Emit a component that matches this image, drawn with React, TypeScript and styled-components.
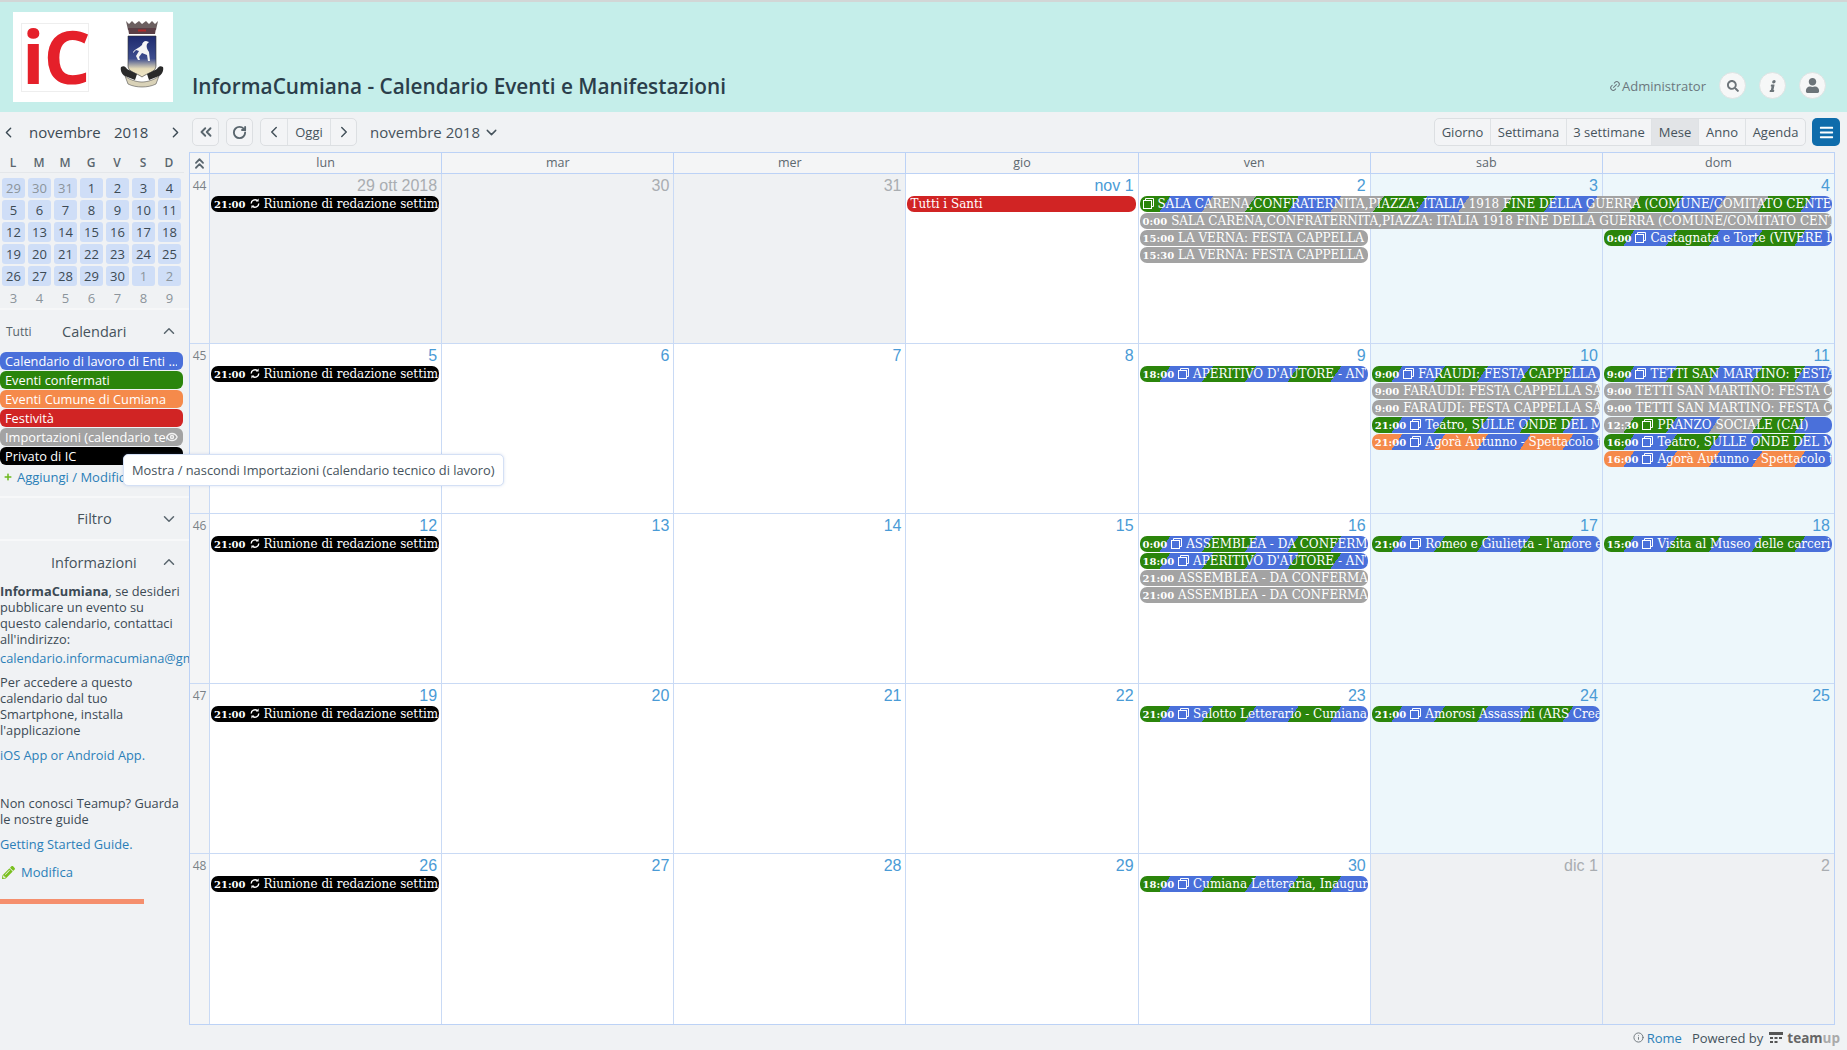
import React from 'react'
import styled, { createGlobalStyle } from 'styled-components'
import { ChevronDown, ChevronLeft, ChevronRight, ChevronUp, ChevronsLeft, ChevronsUp, Eye, Info, Link2, RotateCw } from 'lucide-react'
import { FaBars, FaInfo, FaPencilAlt, FaPlus, FaSearch, FaUser } from 'react-icons/fa'

const GREEN = '#2b850b'
const BLUE = '#4a70da'
const ORANGE = '#f58a4b'
const GRAY = '#a3a3a3'
const RED = '#d12424'
const BLACK = '#000000'

type EventItem = {
  col: number
  span?: number
  row: number
  time?: string
  title: string
  colors: string[]
  icon?: 'copy' | 'repeat'
}

const riunione = (): EventItem => ({
  col: 0,
  row: 0,
  time: '21:00',
  title: 'Riunione di redazione settimanale',
  colors: [BLACK],
  icon: 'repeat'
})

const sala = 'SALA CARENA,CONFRATERNITA,PIAZZA: ITALIA 1918 FINE DELLA GUERRA (COMUNE/COMITATO CENTENARIO)'
const gb = [GREEN, BLUE]

const weeks: { num: number; days: { label: string; muted?: boolean }[]; grayCols: number[]; events: EventItem[] }[] = [
  {
    num: 44,
    days: [
      { label: '29 ott 2018', muted: true },
      { label: '30', muted: true },
      { label: '31', muted: true },
      { label: 'nov 1' },
      { label: '2' },
      { label: '3' },
      { label: '4' }
    ],
    grayCols: [0, 1, 2],
    events: [
      riunione(),
      { col: 3, row: 0, title: 'Tutti i Santi', colors: [RED] },
      { col: 4, span: 3, row: 0, title: sala, colors: [GREEN, BLUE, GRAY], icon: 'copy' },
      { col: 4, span: 3, row: 1, time: '0:00', title: sala, colors: [GRAY] },
      { col: 4, row: 2, time: '15:00', title: 'LA VERNA: FESTA CAPPELLA SAN ROCCO', colors: [GRAY] },
      { col: 6, row: 2, time: '0:00', title: 'Castagnata e Torte (VIVERE LA VITA)', colors: gb, icon: 'copy' },
      { col: 4, row: 3, time: '15:30', title: 'LA VERNA: FESTA CAPPELLA SAN ROCCO', colors: [GRAY] }
    ]
  },
  {
    num: 45,
    days: [{ label: '5' }, { label: '6' }, { label: '7' }, { label: '8' }, { label: '9' }, { label: '10' }, { label: '11' }],
    grayCols: [],
    events: [
      riunione(),
      { col: 4, row: 0, time: '18:00', title: "APERITIVO D'AUTORE - ANTEPRIMA", colors: gb, icon: 'copy' },
      { col: 5, row: 0, time: '9:00', title: 'FARAUDI: FESTA CAPPELLA SAN MARTINO', colors: gb, icon: 'copy' },
      { col: 5, row: 1, time: '9:00', title: 'FARAUDI: FESTA CAPPELLA SAN MARTINO', colors: [GRAY] },
      { col: 5, row: 2, time: '9:00', title: 'FARAUDI: FESTA CAPPELLA SAN MARTINO', colors: [GRAY] },
      { col: 5, row: 3, time: '21:00', title: 'Teatro, SULLE ONDE DEL MARE', colors: gb, icon: 'copy' },
      { col: 5, row: 4, time: '21:00', title: 'Agorà Autunno - Spettacolo teatrale', colors: [ORANGE, BLUE], icon: 'copy' },
      { col: 6, row: 0, time: '9:00', title: 'TETTI SAN MARTINO: FESTA CAPPELLA', colors: gb, icon: 'copy' },
      { col: 6, row: 1, time: '9:00', title: 'TETTI SAN MARTINO: FESTA CAPPELLA', colors: [GRAY] },
      { col: 6, row: 2, time: '9:00', title: 'TETTI SAN MARTINO: FESTA CAPPELLA', colors: [GRAY] },
      { col: 6, row: 3, time: '12:30', title: 'PRANZO SOCIALE (CAI)', colors: [GRAY, GREEN, BLUE], icon: 'copy' },
      { col: 6, row: 4, time: '16:00', title: 'Teatro, SULLE ONDE DEL MARE', colors: gb, icon: 'copy' },
      { col: 6, row: 5, time: '16:00', title: 'Agorà Autunno - Spettacolo teatrale', colors: [ORANGE, BLUE], icon: 'copy' }
    ]
  },
  {
    num: 46,
    days: [{ label: '12' }, { label: '13' }, { label: '14' }, { label: '15' }, { label: '16' }, { label: '17' }, { label: '18' }],
    grayCols: [],
    events: [
      riunione(),
      { col: 4, row: 0, time: '0:00', title: 'ASSEMBLEA - DA CONFERMARE', colors: gb, icon: 'copy' },
      { col: 4, row: 1, time: '18:00', title: "APERITIVO D'AUTORE - ANTEPRIMA", colors: gb, icon: 'copy' },
      { col: 4, row: 2, time: '21:00', title: 'ASSEMBLEA - DA CONFERMARE', colors: [GRAY] },
      { col: 4, row: 3, time: '21:00', title: 'ASSEMBLEA - DA CONFERMARE', colors: [GRAY] },
      { col: 5, row: 0, time: '21:00', title: "Romeo e Giulietta - l'amore è cieco", colors: gb, icon: 'copy' },
      { col: 6, row: 0, time: '15:00', title: 'Visita al Museo delle carceri nuove', colors: gb, icon: 'copy' }
    ]
  },
  {
    num: 47,
    days: [{ label: '19' }, { label: '20' }, { label: '21' }, { label: '22' }, { label: '23' }, { label: '24' }, { label: '25' }],
    grayCols: [],
    events: [
      riunione(),
      { col: 4, row: 0, time: '21:00', title: 'Salotto Letterario - Cumiana legge', colors: gb, icon: 'copy' },
      { col: 5, row: 0, time: '21:00', title: 'Amorosi Assassini (ARS Creativa)', colors: gb, icon: 'copy' }
    ]
  },
  {
    num: 48,
    days: [
      { label: '26' },
      { label: '27' },
      { label: '28' },
      { label: '29' },
      { label: '30' },
      { label: 'dic 1', muted: true },
      { label: '2', muted: true }
    ],
    grayCols: [5, 6],
    events: [riunione(), { col: 4, row: 0, time: '18:00', title: 'Cumiana Letteraria, Inaugurazione', colors: gb, icon: 'copy' }]
  }
]

const miniDays = [
  [29, 30, 31, 1, 2, 3, 4],
  [5, 6, 7, 8, 9, 10, 11],
  [12, 13, 14, 15, 16, 17, 18],
  [19, 20, 21, 22, 23, 24, 25],
  [26, 27, 28, 29, 30, 1, 2],
  [3, 4, 5, 6, 7, 8, 9]
]

const calendars = [
  { name: 'Calendario di lavoro di Enti ...', color: BLUE },
  { name: 'Eventi confermati', color: GREEN },
  { name: 'Eventi Cumune di Cumiana', color: ORANGE },
  { name: 'Festività', color: RED },
  { name: 'Importazioni (calendario tecnico di lavoro)', color: GRAY, hover: true },
  { name: 'Privato di IC', color: BLACK }
]

// fasce oblique degli eventi assegnati a piu calendari
const eventBackground = (colors: string[]) => {
  if (colors.length === 1) return colors[0]
  const size = 35
  const offset = -10
  const stops = colors.map((c, i) => `${c} ${offset + i * size}px, ${c} ${offset + (i + 1) * size}px`)
  return `repeating-linear-gradient(125deg, ${stops.join(', ')})`
}

const CopyIcon = () => (
  <svg width="11" height="11" viewBox="0 0 11 11" fill="none" stroke="currentColor" strokeWidth="1">
    <rect x="0.5" y="2.5" width="8" height="8" />
    <path d="M2.5 2.5V0.5H10.5V8.5H8.5" />
  </svg>
)

const RepeatIcon = () => (
  <svg width="10" height="11" viewBox="0 0 10 11" fill="none" stroke="currentColor" strokeWidth="1.4">
    <path d="M1.2 5.5A3.8 3.8 0 0 1 7.4 2.6" />
    <path d="M8.8 5.5A3.8 3.8 0 0 1 2.6 8.4" />
    <path d="M8.6 0.6V3.6H5.8" fill="currentColor" stroke="none" />
    <path d="M1.4 10.4V7.4H4.2" fill="currentColor" stroke="none" />
  </svg>
)

const Crest = () => (
  <svg width="46" height="68" viewBox="0 0 46 68">
    <defs>
      <linearGradient id="shield" x1="0" y1="0" x2="0" y2="1">
        <stop offset="0" stopColor="#1d2a6e" />
        <stop offset="0.55" stopColor="#3d4d8e" />
        <stop offset="0.8" stopColor="#e6dcb8" />
        <stop offset="1" stopColor="#efe6c8" />
      </linearGradient>
    </defs>
    <path d="M7 1l3 3 3-3 3 3 4-3 3 3 4-3 3 3 3-3 3 3 3-3-2 9H9z" fill="#6b5f60" />
    <path d="M9 8h28l-1 6H10z" fill="#5a3f46" />
    <rect x="19" y="9.5" width="8" height="2" fill="#b02a2a" />
    <path d="M9 16h28v30c0 6-9 7-14 11-5-4-14-5-14-11z" fill="url(#shield)" stroke="#333" strokeWidth="0.6" />
    <path d="M14 32c2-3 6-4 9-7 0-2 2-4 4-4l3 1-2 2c-1 3 0 5 2 8l1 9-2 0-1-6-5-2-3 4 1 3-2 0-2-4 3-5-3-1-3 3z" fill="#f5f5f5" />
    <path d="M2 47c3-2 5 0 6 2l10 5-2 6-10-4c-3-1-5-6-4-9z" fill="#2a2a2a" />
    <path d="M44 47c-3-2-5 0-6 2l-10 5 2 6 10-4c3-1 5-6 4-9z" fill="#2a2a2a" />
    <path d="M6 56c5 4 12 6 17 6s12-2 17-6l-3 8c-4 2-9 3-14 3s-10-1-14-3z" fill="#d9d2b8" stroke="#333" strokeWidth="0.5" />
  </svg>
)

const App: React.FC = () => {
  return (
    <Page>
      <GlobalStyle />
      <Header>
        <LogoBox>
          <LogoMark>iC</LogoMark>
          <CrestBox>
            <Crest />
          </CrestBox>
        </LogoBox>
        <Title>InformaCumiana - Calendario Eventi e Manifestazioni</Title>
        <HeaderRight>
          <AdminLabel>
            <Link2 size={12} style={{ transform: 'rotate(-45deg)' }} />
            Administrator
          </AdminLabel>
          <RoundButton>
            <FaSearch size={12} />
          </RoundButton>
          <RoundButton>
            <FaInfo size={12} style={{ transform: 'skewX(-12deg)' }} />
          </RoundButton>
          <RoundButton>
            <FaUser size={15} />
          </RoundButton>
        </HeaderRight>
      </Header>
      <Body>
        <Sidebar>
          <MiniNav>
            <ChevronLeft size={17} />
            <MiniMonth>novembre</MiniMonth>
            <MiniYear>2018</MiniYear>
            <ChevronRight size={17} />
          </MiniNav>
          <MiniWeekdays>
            {['L', 'M', 'M', 'G', 'V', 'S', 'D'].map((d, i) => (
              <MiniWeekday key={i}>{d}</MiniWeekday>
            ))}
          </MiniWeekdays>
          <MiniGrid>
            {miniDays.map((row, r) =>
              row.map((d, c) => {
                const muted = (r === 0 && d > 20) || (r === 4 && d < 10)
                return (
                  <MiniDay key={`${r}-${c}`} $muted={muted} $plain={r === 5}>
                    {d}
                  </MiniDay>
                )
              })
            )}
          </MiniGrid>
          <Section>
            <SectionHead $tall={42}>
              <AllLabel>Tutti</AllLabel>
              <SectionTitle $left={62}>Calendari</SectionTitle>
              <ChevronUp size={18} />
            </SectionHead>
            <CalendarList>
              {calendars.map((c) => (
                <CalendarPill key={c.name} $color={c.color} $hover={c.hover}>
                  <PillText>{c.name}</PillText>
                  {c.hover && (
                    <PillEye>
                      <Eye size={12} strokeWidth={3} />
                    </PillEye>
                  )}
                </CalendarPill>
              ))}
            </CalendarList>
            <AddRow>
              <FaPlus size={8} color="#6cb81c" />
              <LinkText>Aggiungi / Modifica</LinkText>
            </AddRow>
          </Section>
          <Section>
            <SectionHead $tall={41}>
              <SectionTitle $left={77}>Filtro</SectionTitle>
              <ChevronDown size={18} />
            </SectionHead>
          </Section>
          <InfoSection>
            <SectionHead $tall={42}>
              <SectionTitle $left={51}>Informazioni</SectionTitle>
              <ChevronUp size={18} />
            </SectionHead>
            <InfoBody>
              <InfoText>
                <strong>InformaCumiana</strong>, se desideri pubblicare un evento su questo calendario, contattaci all'indirizzo:
              </InfoText>
              <InfoLink>calendario.informacumiana@gmail.com</InfoLink>
              <InfoText $top={8}>Per accedere a questo calendario dal tuo Smartphone, installa l'applicazione</InfoText>
              <InfoLink $top={9}>iOS App or Android App.</InfoLink>
              <InfoText $top={32}>Non conosci Teamup? Guarda le nostre guide</InfoText>
              <InfoLink $top={9}>Getting Started Guide.</InfoLink>
              <EditRow>
                <FaPencilAlt size={13} color="#7ac01f" />
                <LinkText>Modifica</LinkText>
              </EditRow>
            </InfoBody>
            <ProgressBar />
          </InfoSection>
        </Sidebar>
        <Main>
          <Toolbar>
            <ToolButton $width={27}>
              <ChevronsLeft size={18} strokeWidth={2.5} />
            </ToolButton>
            <ToolButton $width={27}>
              <RotateCw size={15} strokeWidth={3} />
            </ToolButton>
            <ButtonGroup>
              <GroupButton $width={26}>
                <ChevronLeft size={18} />
              </GroupButton>
              <GroupButton $width={43}>Oggi</GroupButton>
              <GroupButton $width={26}>
                <ChevronRight size={18} />
              </GroupButton>
            </ButtonGroup>
            <CurrentMonth>
              novembre 2018 <ChevronDown size={17} />
            </CurrentMonth>
            <ToolbarSpacer />
            <ButtonGroup>
              <GroupButton $width={55}>Giorno</GroupButton>
              <GroupButton $width={76}>Settimana</GroupButton>
              <GroupButton $width={85}>3 settimane</GroupButton>
              <GroupButton $width={47} $active>
                Mese
              </GroupButton>
              <GroupButton $width={47}>Anno</GroupButton>
              <GroupButton $width={60}>Agenda</GroupButton>
            </ButtonGroup>
            <MenuButton>
              <FaBars size={15} />
            </MenuButton>
          </Toolbar>
          <CalendarGrid>
            <HeadRow>
              <HeadCorner>
                <ChevronsUp size={17} strokeWidth={2.5} />
              </HeadCorner>
              {['lun', 'mar', 'mer', 'gio', 'ven', 'sab', 'dom'].map((d) => (
                <HeadCell key={d}>{d}</HeadCell>
              ))}
            </HeadRow>
            {weeks.map((w) => (
              <WeekRow key={w.num}>
                <WeekNumber>{w.num}</WeekNumber>
                {w.days.map((d, i) => (
                  <DayCell key={i} $col={i} $gray={w.grayCols.includes(i)} $weekend={i >= 5}>
                    <DayNumber $muted={d.muted}>{d.label}</DayNumber>
                  </DayCell>
                ))}
                {w.events.map((e, i) => (
                  <EventBar key={i} $col={e.col} $span={e.span || 1} $row={e.row} $bg={eventBackground(e.colors)}>
                    {e.time && <EventTime>{e.time}</EventTime>}
                    {e.icon === 'copy' && (
                      <EventIcon>
                        <CopyIcon />
                      </EventIcon>
                    )}
                    {e.icon === 'repeat' && (
                      <EventIcon>
                        <RepeatIcon />
                      </EventIcon>
                    )}
                    {e.title}
                  </EventBar>
                ))}
              </WeekRow>
            ))}
          </CalendarGrid>
          <Footer>
            <Info size={11} color="#6a7378" />
            <FooterLink>Rome</FooterLink>
            <PoweredBy>Powered by</PoweredBy>
            <svg width="14" height="14" viewBox="0 0 14 14" fill="#555">
              <rect x="0" y="1" width="14" height="3" />
              <rect x="1" y="6" width="3" height="2" />
              <rect x="5.5" y="6" width="3" height="2" />
              <rect x="10" y="6" width="3" height="2" />
              <rect x="1" y="10" width="3" height="2" />
              <rect x="5.5" y="10" width="3" height="2" />
            </svg>
            <TeamupWord>
              team<TeamupLight>up</TeamupLight>
            </TeamupWord>
          </Footer>
        </Main>
        <Tooltip>Mostra / nascondi Importazioni (calendario tecnico di lavoro)</Tooltip>
      </Body>
    </Page>
  )
}

const GlobalStyle = createGlobalStyle`
  html, body {
    margin: 0;
    padding: 0;
    height: 100%;
    overflow: hidden;
  }
  body {
    font-family: "Open Sans", "Liberation Sans", sans-serif;
    color: #3c4a54;
    background: #f0f2f4;
  }
  * {
    box-sizing: border-box;
  }
`

const Page = styled.div`
  width: 1847px;
  height: 1050px;
  display: flex;
  flex-direction: column;
  border-top: 2px solid #d2d6d6;
`

const Header = styled.header`
  height: 110px;
  flex-shrink: 0;
  background: #c5eeea;
  display: flex;
  align-items: flex-start;
  padding: 10px 21px 0 13px;
`

const LogoBox = styled.div`
  width: 160px;
  height: 90px;
  background: #fff;
  display: flex;
  align-items: center;
  padding: 0 8px;
`

const LogoMark = styled.div`
  width: 69px;
  height: 69px;
  border: 1px solid #eee;
  color: #e5202a;
  font-size: 74px;
  font-weight: 700;
  line-height: 64px;
  letter-spacing: -1px;
  text-align: center;
  overflow: hidden;
`

const CrestBox = styled.div`
  display: flex;
  margin: -6px 0 0 30px;
`

const Title = styled.h1`
  margin: 60px 0 0 19px;
  font-size: 20.8px;
  line-height: 28px;
  font-weight: 600;
  color: #2b3e4b;
  white-space: nowrap;
`

const HeaderRight = styled.div`
  margin-left: auto;
  margin-top: 60px;
  display: flex;
  align-items: center;
  gap: 13px;
`

const AdminLabel = styled.div`
  display: flex;
  align-items: center;
  gap: 1px;
  font-size: 13px;
  color: #6b777d;
`

const RoundButton = styled.div`
  width: 27px;
  height: 27px;
  border-radius: 50%;
  border: 1px solid #dfe3e3;
  background: #f6f7f7;
  color: #6c7479;
  display: flex;
  align-items: center;
  justify-content: center;
`

const Body = styled.div`
  flex: 1;
  display: flex;
  position: relative;
  min-height: 0;
`

const Sidebar = styled.aside`
  width: 189px;
  flex-shrink: 0;
  overflow: hidden;
`

const MiniNav = styled.div`
  height: 40px;
  display: flex;
  align-items: center;
  font-size: 15px;
  color: #3c4a54;
`

const MiniMonth = styled.span`
  margin-left: 12px;
  width: 85px;
`

const MiniYear = styled.span`
  width: 53px;
`

const MiniWeekdays = styled.div`
  display: grid;
  grid-template-columns: repeat(7, 26px);
  width: 184px;
  height: 21px;
  border-bottom: 1px solid #e4e7ea;
  margin-bottom: 5px;
`

const MiniWeekday = styled.div`
  text-align: center;
  font-size: 12px;
  line-height: 21px;
  font-weight: 600;
  color: #5a666e;
`

const MiniGrid = styled.div`
  display: grid;
  grid-template-columns: repeat(7, 23px);
  grid-auto-rows: 20px;
  column-gap: 3px;
  row-gap: 2px;
  padding: 0 0 0 2px;
  height: 132px;
  border-bottom: 2px solid #f6f7f8;
`

const MiniDay = styled.div<{ $muted?: boolean; $plain?: boolean }>`
  border-radius: 3px;
  background: ${(p) => (p.$plain ? 'transparent' : '#cfdef7')};
  color: ${(p) => (p.$muted || p.$plain ? '#8b949b' : '#3c4a54')};
  text-align: center;
  font-size: 13px;
  line-height: 21px;
`

const Section = styled.section`
  border-bottom: 2px solid #f7f8f9;
`

const SectionHead = styled.div<{ $tall: number }>`
  position: relative;
  height: ${(p) => p.$tall}px;
  display: flex;
  align-items: center;
  justify-content: flex-end;
  padding-right: 11px;
  color: #5a666e;
`

const AllLabel = styled.span`
  position: absolute;
  left: 6px;
  font-size: 12px;
  color: #56636b;
`

const SectionTitle = styled.span<{ $left: number }>`
  position: absolute;
  left: ${(p) => p.$left}px;
  font-size: 14.5px;
  color: #46535c;
`

const CalendarList = styled.div`
  display: flex;
  flex-direction: column;
  gap: 1px;
  width: 183px;
`

const CalendarPill = styled.div<{ $color: string; $hover?: boolean }>`
  position: relative;
  height: 18px;
  border-radius: 6px;
  background: ${(p) => p.$color};
  color: #fff;
  font-size: 12.8px;
  line-height: 18px;
  padding: 0 ${(p) => (p.$hover ? '16px' : '6px')} 0 5px;
`

const PillText = styled.div`
  overflow: hidden;
  white-space: nowrap;
`

const PillEye = styled.span`
  position: absolute;
  right: 5px;
  top: 3px;
  display: flex;
  opacity: 0.85;
`

const AddRow = styled.div`
  display: flex;
  align-items: center;
  gap: 5px;
  height: 19px;
  margin-top: 2px;
  padding-left: 4px;
  margin-bottom: 10px;
`

const LinkText = styled.span`
  font-size: 13px;
  color: #2b7fb8;
  white-space: nowrap;
`

const InfoSection = styled.section``

const InfoBody = styled.div`
  width: 183px;
  font-size: 12.8px;
  line-height: 16px;
  color: #3c4a54;
`

const InfoText = styled.p<{ $top?: number }>`
  margin: ${(p) => p.$top || 0}px 0 0;
  strong {
    font-weight: 700;
  }
`

const InfoLink = styled.div<{ $top?: number }>`
  margin-top: ${(p) => p.$top || 3}px;
  color: #2b7fb8;
  white-space: nowrap;
`

const EditRow = styled.div`
  display: flex;
  align-items: center;
  gap: 6px;
  margin-top: 11px;
  padding-left: 2px;
  height: 18px;
`

const ProgressBar = styled.div`
  width: 144px;
  height: 5px;
  margin-top: 18px;
  background: #f58f6d;
`

const Main = styled.main`
  flex: 1;
  min-width: 0;
  display: flex;
  flex-direction: column;
`

const Toolbar = styled.div`
  height: 40px;
  flex-shrink: 0;
  display: flex;
  align-items: center;
  gap: 7px;
  padding: 0 7px 0 3px;
`

const ToolButton = styled.div<{ $width: number }>`
  width: ${(p) => p.$width}px;
  height: 28px;
  background: #f3f4f6;
  border: 1px solid #dcdfe2;
  border-radius: 5px;
  color: #5a666e;
  display: flex;
  align-items: center;
  justify-content: center;
`

const ButtonGroup = styled.div`
  display: flex;
  height: 28px;
  background: #f3f4f6;
  border: 1px solid #dcdfe2;
  border-radius: 5px;
  overflow: hidden;
`

const GroupButton = styled.div<{ $width: number; $active?: boolean }>`
  width: ${(p) => p.$width}px;
  display: flex;
  align-items: center;
  justify-content: center;
  font-size: 13px;
  color: #46535c;
  background: ${(p) => (p.$active ? '#e2e4e7' : 'transparent')};
  border-left: 1px solid #dfe2e5;
  &:first-child {
    border-left: 0;
  }
`

const CurrentMonth = styled.div`
  display: flex;
  align-items: center;
  gap: 3px;
  margin-left: 6px;
  font-size: 15px;
  color: #46535c;
`

const ToolbarSpacer = styled.div`
  flex: 1;
`

const MenuButton = styled.div`
  width: 28px;
  height: 28px;
  margin-left: -1px;
  border-radius: 5px;
  background: #0f6cab;
  color: #fff;
  display: flex;
  align-items: center;
  justify-content: center;
`

const CalendarGrid = styled.div`
  width: 1646px;
  flex: 1;
  min-height: 0;
  display: grid;
  grid-template-rows: 21px repeat(5, 1fr);
  border: 1px solid #bcd2f6;
`

const HeadRow = styled.div`
  display: grid;
  grid-template-columns: 19px repeat(7, 1fr);
  background: #f4f5f6;
  border-bottom: 1px solid #bcd2f6;
`

const HeadCorner = styled.div`
  display: flex;
  align-items: center;
  justify-content: center;
  color: #5a666e;
`

const HeadCell = styled.div`
  border-left: 1px solid #bcd2f6;
  text-align: center;
  font-size: 12.5px;
  line-height: 20px;
  color: #5d686f;
`

const WeekRow = styled.div`
  display: grid;
  grid-template-columns: 19px repeat(7, 1fr);
  grid-template-rows: 22px repeat(6, 17px) 1fr;
  min-height: 0;
  border-bottom: 1px solid #c9daf5;
  &:last-child {
    border-bottom: 0;
  }
`

const WeekNumber = styled.div`
  grid-column: 1;
  grid-row: 1 / -1;
  background: #f4f5f6;
  font-size: 12px;
  line-height: 23px;
  text-align: center;
  color: #7a8287;
`

const DayCell = styled.div<{ $col: number; $gray: boolean; $weekend: boolean }>`
  grid-column: ${(p) => p.$col + 2};
  grid-row: 1 / -1;
  border-left: 1px solid #c9daf5;
  background: ${(p) => (p.$gray ? '#eff1f3' : p.$weekend ? '#edf7fb' : '#fff')};
`

const DayNumber = styled.div<{ $muted?: boolean }>`
  font-family: "Liberation Sans", Arial, sans-serif;
  font-size: 16px;
  line-height: 23px;
  text-align: right;
  padding-right: 4px;
  color: ${(p) => (p.$muted ? '#a9adb1' : '#4a9bd6')};
`

const EventBar = styled.div<{ $col: number; $span: number; $row: number; $bg: string }>`
  grid-column: ${(p) => p.$col + 2} / span ${(p) => p.$span};
  grid-row: ${(p) => p.$row + 2};
  z-index: 1;
  height: 16px;
  margin: 0 2px;
  border-radius: 7px;
  padding: 0 0 0 3px;
  background: ${(p) => p.$bg};
  color: #fff;
  font-family: "DejaVu Serif Condensed", "DejaVu Serif", serif;
  font-size: 13.3px;
  line-height: 16px;
  white-space: nowrap;
  overflow: hidden;
`

const EventTime = styled.b`
  font-family: "DejaVu Serif", serif;
  font-size: 10px;
  margin-right: 4px;
`

const EventIcon = styled.span`
  display: inline-block;
  margin-right: 4px;
  vertical-align: -1px;
  line-height: 0;
`

const Footer = styled.footer`
  height: 25px;
  flex-shrink: 0;
  display: flex;
  align-items: center;
  justify-content: flex-end;
  padding-right: 7px;
  font-size: 13px;
`

const FooterLink = styled.span`
  color: #2b7fb8;
  margin-left: 3px;
`

const PoweredBy = styled.span`
  color: #46535c;
  margin: 0 6px 0 10px;
`

const TeamupWord = styled.span`
  margin-left: 4px;
  font-size: 13.5px;
  font-weight: 700;
  color: #666;
`

const TeamupLight = styled.span`
  color: #aaa;
`

const Tooltip = styled.div`
  position: absolute;
  left: 123px;
  top: 342px;
  height: 32px;
  padding: 0 8px;
  background: #fff;
  border: 1px solid #d4e0f5;
  border-radius: 5px;
  box-shadow: 0 0 3px rgba(90, 130, 200, 0.25);
  font-size: 12.85px;
  line-height: 30px;
  color: #46535c;
  white-space: nowrap;
  z-index: 5;
`

export default App
